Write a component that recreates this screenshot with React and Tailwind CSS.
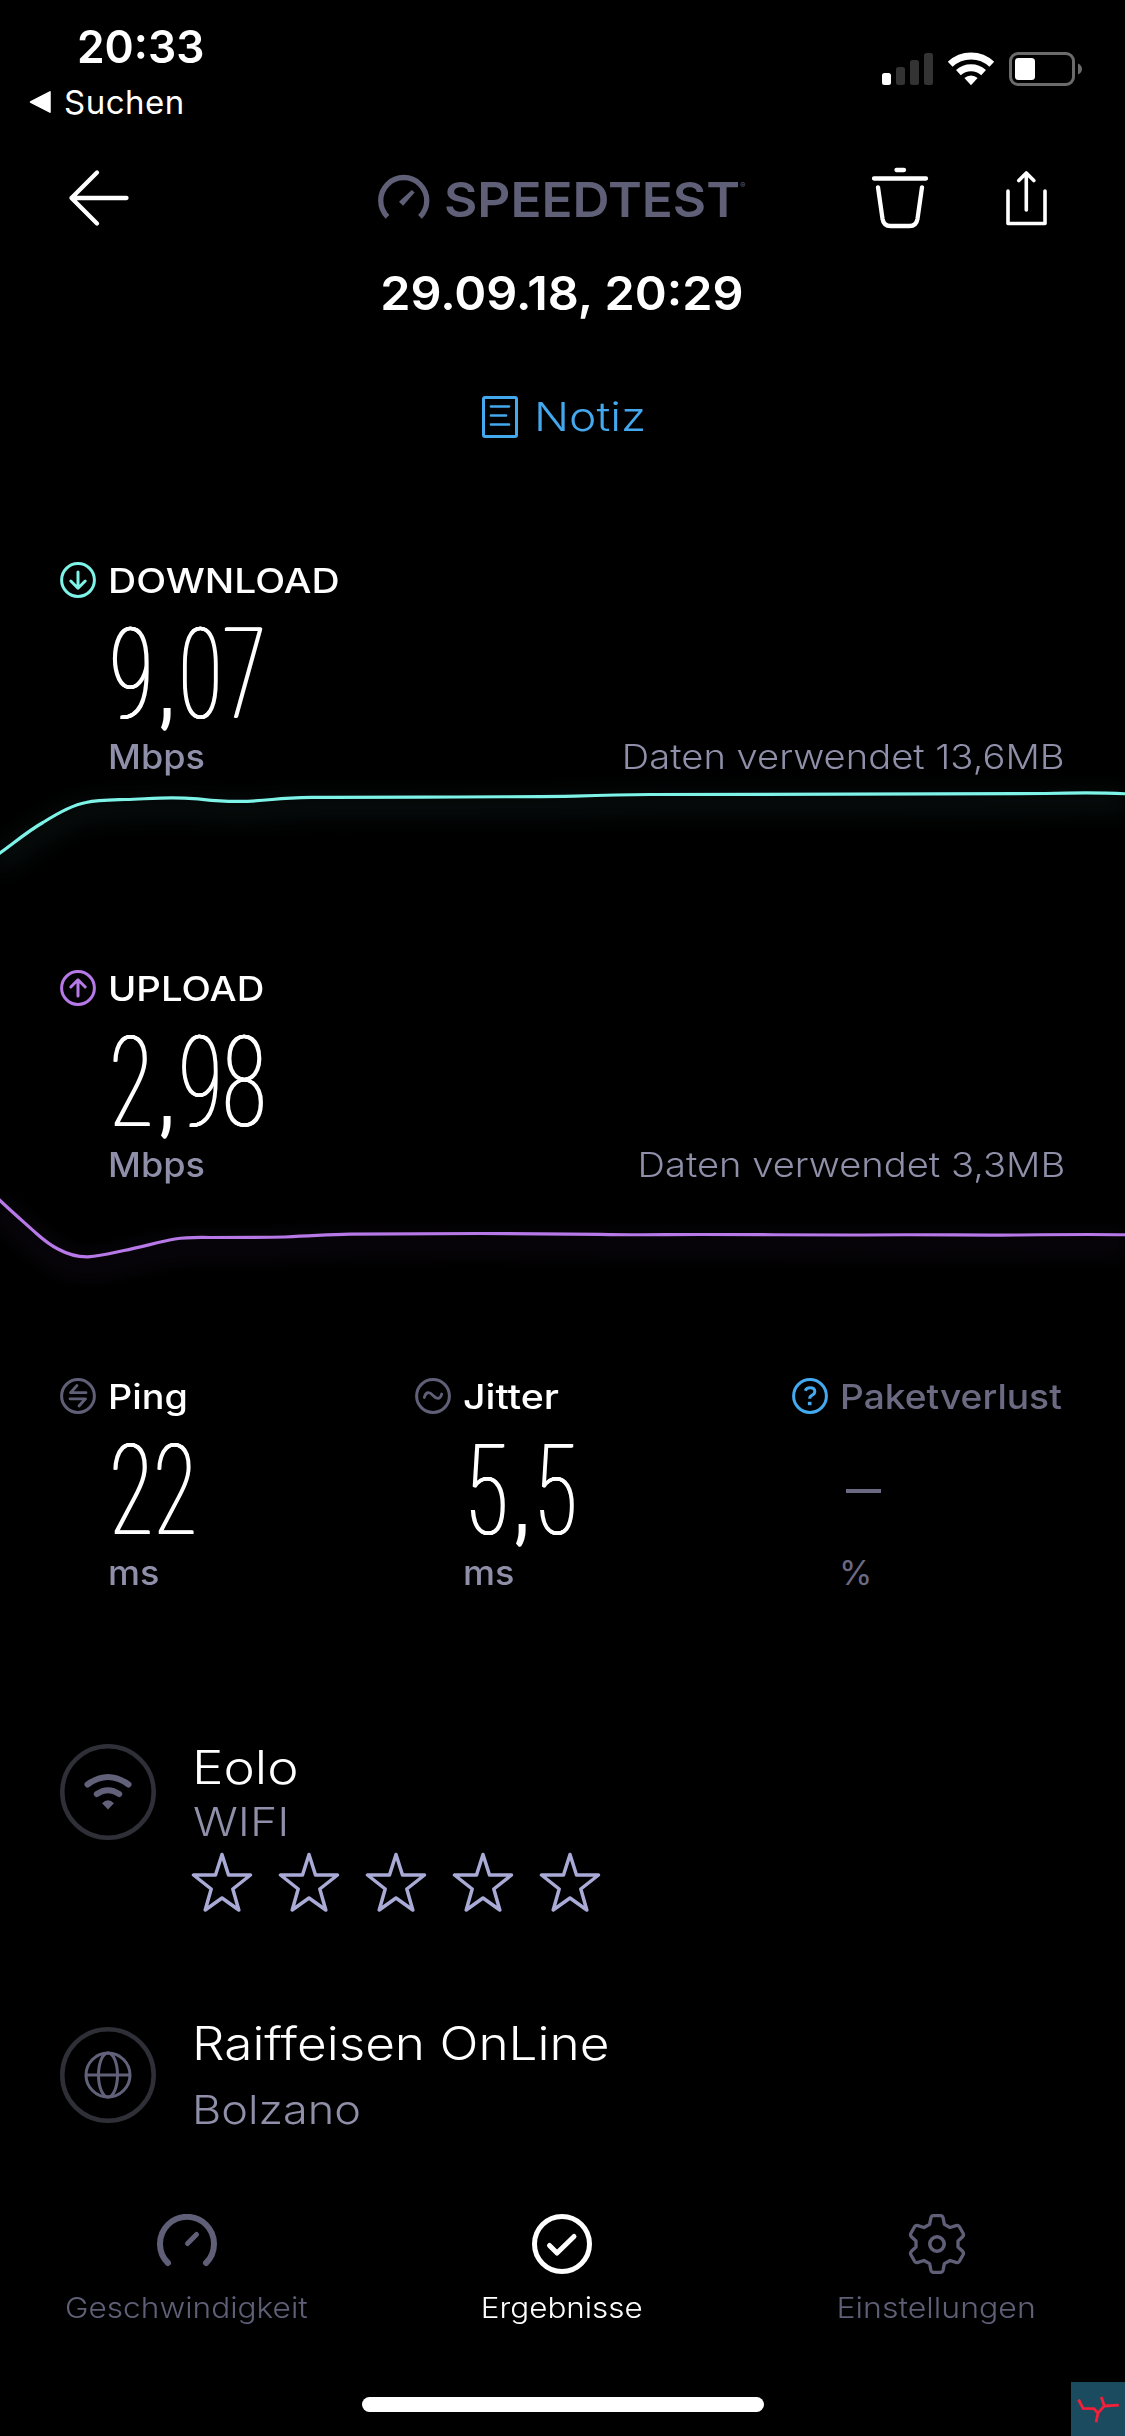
import React from "react";

function StatusBar() {
  return (
    <div className="flex h-[135px] justify-between pl-[29px] pr-[43px]">
      <div className="flex flex-col pt-[24px]">
        <span className="ml-[48px] h-[46px] w-[130px] origin-left scale-x-[0.985] text-[45px] font-semibold leading-[46px]">20:33</span>
        <div className="mt-[12px] flex h-[40px] items-center">
          <svg className="h-[24px] w-[23px]" viewBox="0 0 23 24">
            <path d="M1.5 12 21 1.8v20.4z" fill="#fff" stroke="#fff" strokeWidth="1.5" strokeLinejoin="round" />
          </svg>
          <span className="ml-[12px] text-[33px] leading-[40px] tracking-[0.5px]">Suchen</span>
        </div>
      </div>
      <svg className="mt-[50px] h-[38px] w-[202px]" viewBox="880 50 202 38" fill="none">
        <rect x="882" y="73" width="9" height="12" rx="2.5" fill="#fff" />
        <rect x="896" y="67" width="9" height="18" rx="2.5" fill="#333" />
        <rect x="910" y="60" width="9" height="25" rx="2.5" fill="#333" />
        <rect x="924" y="53" width="9" height="32" rx="2.5" fill="#333" />
        <g stroke="#fff" strokeWidth="7">
          <path d="M950.2 64.2a30.3 30.3 0 0 1 41.6 0" />
          <path d="M958.4 72.6a18.6 18.6 0 0 1 25.2 0" />
        </g>
        <path d="M971 85.2l-6.6-7.2a9.8 9.8 0 0 1 13.2 0z" fill="#fff" />
        <rect x="1010.5" y="53.5" width="63" height="31" rx="7.5" stroke="#6b6b6b" strokeWidth="3" />
        <rect x="1015" y="58" width="20" height="22" rx="3.5" fill="#fff" />
        <path d="M1078 63.5q4 2 4 5.500t-4 5.500z" fill="#6b6b6b" />
      </svg>
    </div>
  );
}

function Header() {
  return (
    <header className="flex h-[126px] items-center pl-[67px] pr-[76px]">
      <svg className="h-[60px] w-[64px]" viewBox="67 168 64 60" fill="none" stroke="#fff" strokeWidth="4.300" strokeLinecap="round" strokeLinejoin="round">
        <path d="M126.500 198H71.500M97 172.500 71.500 198 97 223.500" />
      </svg>
      <svg className="ml-[247px] h-[52px] w-[52px]" viewBox="378 173 52 52" fill="none">
        <path d="M387.500 217.800a23 23 0 1 1 32.500 0" stroke="#5f5f77" strokeWidth="5.300" />
        <path d="M399 202.800l12.800-11.800 2.800 2.600-11.500 13.200z" fill="#5f5f77" />
      </svg>
      <span className="ml-[14px] mt-[3px] w-[296px] origin-left scale-x-[1.068] whitespace-nowrap text-[48px] font-semibold leading-[60px] text-[#5f5f77]">SPEEDTEST</span>
      <span className="mb-[26px] text-[8px] leading-[8px] text-[#5f5f77]">®</span>
      <svg className="ml-auto h-[62px] w-[60px]" viewBox="870 167 60 62" fill="none" stroke="#fff" strokeWidth="4.300" strokeLinecap="round" strokeLinejoin="round">
        <path d="M896.500 170h7.500M874 178.500h52M878 187.300l4.500 31.500q1.200 7.200 8 7.200h19q6.800 0 8-7.200l4.500-31.500" />
      </svg>
      <svg className="ml-[74px] h-[60px] w-[45px]" viewBox="1004 168 45 60" fill="none" stroke="#fff" strokeWidth="3.600" strokeLinecap="round" strokeLinejoin="round">
        <path d="M1008 191v32.500h37V191M1026.300 210v-36M1018.800 180.500l7.500-7.500 7.500 7.500" />
      </svg>
    </header>
  );
}

function Value({ children }) {
  const [whole, fraction] = children.split(",");
  return (
    <div className="ml-[50px] mt-[16px] h-[118px] w-[200px] origin-left scale-x-[0.61] whitespace-nowrap font-['Roboto'] text-[127px] font-thin leading-[118px] tracking-[2.500px] [text-shadow:1.500px_0_0_#fff,-1.500px_0_0_#fff,0_0.300px_0_#fff,0_-0.300px_0_#fff]">
      {whole}
      {fraction && (
        <>
          <span className="ml-[12px] mr-[9px] text-[90px] font-normal leading-none">,</span>
          {fraction}
        </>
      )}
    </div>
  );
}

function Ring({ color, children }) {
  return (
    <svg className="h-[36px] w-[36px] shrink-0" viewBox="0 0 36 36" fill="none" stroke={color} strokeWidth="3" strokeLinecap="round" strokeLinejoin="round">
      <circle cx="18" cy="18" r="16.400" />
      {children}
    </svg>
  );
}

function Transfer({ title, titleClass, color, arrow, value, data, path, glowId }) {
  return (
    <section className="h-[408px] pt-[51px]">
      <div className="px-[60px]">
        <div className="flex h-[40px] items-center gap-[12px]">
          <Ring color={color}><path d={arrow} /></Ring>
          <span className={titleClass}>{title}</span>
        </div>
        <Value>{value}</Value>
        <div className="flex h-[45px] items-center justify-between pl-[48px] text-[34px] leading-[45px] text-[#8f8fa9]">
          <span className="origin-left scale-x-[1.06] font-medium">Mbps</span>
          <span className="origin-right scale-x-[1.122] font-[350]">{data}</span>
        </div>
      </div>
      <svg className="h-[138px] w-[1125px] overflow-visible" viewBox="0 0 1125 138" fill="none">
        <defs>
          <filter id={glowId} x="-5%" y="-100%" width="110%" height="300%">
            <feGaussianBlur stdDeviation="12" />
          </filter>
        </defs>
        <path d={path} transform="translate(0 9)" stroke={color} strokeWidth="16" opacity="0.08" filter={`url(#${glowId})`} />
        <path d={path} stroke={color} strokeWidth="3.200" />
      </svg>
    </section>
  );
}

function Stat({ icon, label, value, unit, className, labelClass, unitClass }) {
  return (
    <div className={className}>
      <div className="flex h-[40px] items-center gap-[12px]">
        {icon}
        <span className={labelClass}>{label}</span>
      </div>
      {value}
      <div className="flex h-[45px] items-center pl-[48px] text-[34px] leading-[45px]">
        <span className={unitClass}>{unit}</span>
      </div>
    </div>
  );
}

function Stats() {
  return (
    <section className="flex h-[270px] pl-[60px] pt-[51px]">
      <Stat
        className="w-[355px]"
        icon={<Ring color="#5f5f77"><path strokeWidth="2.800" d="M17 7.500 10.500 14.700H26M19 28l6.500-7.200H10" /></Ring>}
        label="Ping"
        labelClass="mt-[2px] origin-left scale-x-[1.11] text-[34px] font-medium leading-[40px]"
        value={<Value>22</Value>}
        unit="ms"
        unitClass="origin-left scale-x-[1.06] font-medium text-[#8f8fa9]"
      />
      <Stat
        className="w-[377px]"
        icon={<Ring color="#5f5f77"><path strokeWidth="2.800" d="M9.300 19.500c1.500-6 5-6 8.700-2s7.500 4 8.700-1.500" /></Ring>}
        label="Jitter"
        labelClass="mt-[2px] origin-left scale-x-[1.155] text-[34px] font-medium leading-[40px]"
        value={<Value>5,5</Value>}
        unit="ms"
        unitClass="origin-left scale-x-[1.06] font-medium text-[#8f8fa9]"
      />
      <Stat
        className="w-[290px]"
        icon={
          <Ring color="#44aaf0">
            <path d="M13.300 12.800q1-3 4.700-3 4.800 0 4.800 3.800 0 2.500-2.600 3.600-2.500 1.100-2.500 3.600" strokeLinecap="butt" />
            <path d="M17.700 23.800v3.400" strokeWidth="3.600" strokeLinecap="butt" />
          </Ring>
        }
        label="Paketverlust"
        labelClass="mt-[2px] origin-left scale-x-[1.093] text-[34px] font-medium leading-[40px] text-[#6b6a82]"
        value={<div className="ml-[54px] mt-[14px] flex h-[120px] items-center pt-[2px]"><div className="h-[4px] w-[35px] bg-[#6b6a82]" /></div>}
        unit="%"
        unitClass="-ml-[1px] font-normal text-[#6b6a82]"
      />
    </section>
  );
}

function Stars() {
  return (
    <div className="-ml-[2px] flex gap-[25px]">
      {[0, 1, 2, 3, 4].map((i) => (
        <svg key={i} className="h-[60px] w-[62px]" viewBox="191 1852 62 60" fill="none" stroke="#a9abd6" strokeWidth="3.500" strokeLinejoin="round">
          <path d="M222 1854.500l6.500 20.500h22l-17.700 14 6 21-16.800-12-16.800 12 6-21-17.700-14h22z" />
        </svg>
      ))}
    </div>
  );
}

function Providers() {
  return (
    <section className="pl-[60px]">
      <div className="mt-[149px] flex">
        <svg className="h-[96px] w-[96px]" viewBox="60 1744 96 96" fill="none">
          <circle cx="108" cy="1792" r="45.700" stroke="#2f2f38" strokeWidth="4.500" />
          <g stroke="#61617a" strokeWidth="6" strokeLinecap="round">
            <path d="M87.500 1784.500q20.500-15 41 0" />
            <path d="M96.800 1794q11.200-7.500 22.400 0" />
          </g>
          <path d="M108 1809.500l-6-6.300q6-6 12 0z" fill="#61617a" />
        </svg>
        <div className="ml-[37px] flex flex-col items-start">
          <span className="-ml-[1px] origin-left scale-x-[1.15] text-[46px] font-[350] leading-[47px]">Eolo</span>
          <span className="origin-left scale-x-[1.16] text-[40px] font-light leading-[61px] text-[#8f8fa9]">WIFI</span>
          <Stars />
        </div>
      </div>
      <div className="mt-[108px] flex">
        <svg className="mt-[6.500px] h-[96px] w-[96px]" viewBox="60 2026.500 96 96" fill="none">
          <circle cx="108" cy="2074.500" r="45.700" stroke="#2f2f38" strokeWidth="4.500" />
          <g stroke="#61617a" strokeWidth="3">
            <circle cx="108" cy="2074.500" r="22" />
            <ellipse cx="108" cy="2074.500" rx="9.500" ry="22" />
            <path d="M86 2074.500h44" />
          </g>
        </svg>
        <div className="ml-[36px] flex flex-col items-start">
          <span className="origin-left scale-x-[1.115] whitespace-nowrap text-[46px] font-[350] leading-[47px]">Raiffeisen OnLine</span>
          <span className="origin-left scale-x-[1.127] text-[40px] font-[350] leading-[85px] text-[#8f8fa9]">Bolzano</span>
        </div>
      </div>
    </section>
  );
}

function TabBar() {
  return (
    <nav className="-ml-[1px] mt-[62px] grid w-[1125px] grid-cols-3 text-[29px] font-[350] leading-[67px]">
      <div className="flex flex-col items-center text-[#5f5f77]">
        <svg className="h-[60px] w-[60px]" viewBox="0 0 60 60" fill="none" stroke="currentColor" strokeWidth="6" strokeLinecap="round">
          <path d="M11 49a27 27 0 1 1 38 0" />
          <path d="M30.500 29.500l9-9" strokeWidth="5" />
        </svg>
        <span className="scale-x-[1.09]">Geschwindigkeit</span>
      </div>
      <div className="flex flex-col items-center text-white">
        <svg className="h-[60px] w-[60px]" viewBox="0 0 60 60" fill="none" stroke="currentColor" strokeWidth="5" strokeLinecap="round" strokeLinejoin="round">
          <circle cx="30" cy="30" r="27.500" />
          <path d="M17.500 31.500l7.500 7.500 17-16.500" />
        </svg>
        <span className="scale-x-[1.083]">Ergebnisse</span>
      </div>
      <div className="flex flex-col items-center text-[#5f5f77]">
        <svg className="h-[60px] w-[60px]" viewBox="0 0 60 60" fill="none" stroke="currentColor" strokeWidth="3.300" strokeLinejoin="round">
          <path d="M26.500 1.700h7q2 0 2.600 2.200l1.300 6.500 5.600 3.100 6-1.900q2.200-.7 3.400 1.100l3.700 6.500q1 2-.5 3.500l-4.600 4.300v6l4.600 4.300q1.500 1.500.5 3.500l-3.700 6.500q-1.200 1.800-3.400 1.100l-6-1.900-5.600 3.100-1.300 6.500q-.6 2.200-2.600 2.200h-7q-2 0-2.600-2.200l-1.300-6.500-5.600-3.100-6 1.900q-2.200.7-3.400-1.100l-3.700-6.500q-1-2 .5-3.500L9 33v-6l-4.600-4.300q-1.500-1.500-.5-3.500l3.700-6.500q1.200-1.800 3.400-1.100l6 1.900 5.600-3.100 1.300-6.500q.6-2.200 2.600-2.200z" />
          <circle cx="30" cy="30" r="7.200" strokeWidth="3.600" />
        </svg>
        <span className="scale-x-[1.105]">Einstellungen</span>
      </div>
    </nav>
  );
}

const DOWNLOAD_PATH =
  "M-4 77 0 74C14 64 28 52 43 43.500 58 34 72 26 86 23.500 98 21 112 21 126 20.500 142 20 156 19 172 18.800 186 18.800 192 19.500 202 20.300 218 22 228 22.500 240 22.300 252 22.300 262 21.500 272 20.500 288 18.800 296 18.500 312 18.300 350 18.500 390 18.500 420 18.200 490 17.500 540 18 575 17.200 610 16 620 15.700 650 15.500 780 15.500 900 14.800 1045 14.500 1085 13.300 1105 13.500 1129 15";

const UPLOAD_PATH =
  "M-4 10 0 13.500C12 25 26 37 37 47 46 55 52 59 58 62 68 67.500 78 70 88 69.800 102 69 112 66 124 63.500 142 60 162 54 175 52 188 50 196 50.500 210 50.500 240 50.500 265 50.500 285 50 320 48.500 330 47.500 350 47.200 400 47.300 440 46.500 480 46.500 530 47 570 46.800 600 47.300 640 48.300 660 47.500 700 47.500 760 47.300 790 48.200 850 48 930 47.200 960 48.300 1020 48 1060 47.500 1100 47.300 1129 47.800";

export default function App() {
  return (
    <div className="relative h-[2436px] w-[1125px] overflow-hidden bg-black font-['Inter',sans-serif] text-white">
      <StatusBar />
      <Header />
      <div className="flex h-[64px] items-center justify-center">
        <span className="-ml-[2px] scale-x-[1.033] text-[47px] font-semibold leading-[64px]">29.09.18, 20:29</span>
      </div>
      <div className="flex h-[184px] items-center pl-[481px] text-[#44a8ee]">
        <svg className="h-[44px] w-[38px]" viewBox="481 395 38 44" fill="none" stroke="currentColor" strokeWidth="3" strokeLinecap="round">
          <rect x="483.500" y="397.500" width="33" height="39" rx="1.500" />
          <path d="M491 406.500h18M491 415.500h15M491 424.500h18" strokeWidth="2.700" />
        </svg>
        <span className="ml-[15px] origin-left scale-x-[1.155] text-[40px] font-[350] leading-[50px]">Notiz</span>
      </div>
      <Transfer
        title="DOWNLOAD"
        titleClass="mt-[2px] origin-left scale-x-[1.147] text-[34px] font-medium leading-[40px]"
        color="#7ef3e8"
        arrow="M18 10v16M10.800 19l7.200 7.200 7.200-7.200"
        value="9,07"
        data="Daten verwendet 13,6MB"
        path={DOWNLOAD_PATH}
        glowId="glow-download"
      />
      <Transfer
        title="UPLOAD"
        titleClass="mt-[2px] origin-left scale-x-[1.127] text-[34px] font-medium leading-[40px]"
        color="#b778e8"
        arrow="M18 26V10M10.800 17l7.200-7.200 7.200 7.200"
        value="2,98"
        data="Daten verwendet 3,3MB"
        path={UPLOAD_PATH}
        glowId="glow-upload"
      />
      <Stats />
      <Providers />
      <TabBar />
      <div className="ml-[362px] mt-[56px] h-[15px] w-[402px] rounded-full bg-white" />
      <div className="absolute bottom-0 right-0 h-[54px] w-[54px] bg-[#1b4b5e]">
        <svg className="h-[54px] w-[54px]" viewBox="1071 2382 54 54" fill="none" stroke="#f2203a" strokeWidth="2.800">
          <path d="M1078.500 2399.500l4.500 8.800 11 .4 4 4.500-2 9M1098 2413.200l6.300-7.200-3-9M1104.300 2406l14.500-.8" />
        </svg>
      </div>
    </div>
  );
}
